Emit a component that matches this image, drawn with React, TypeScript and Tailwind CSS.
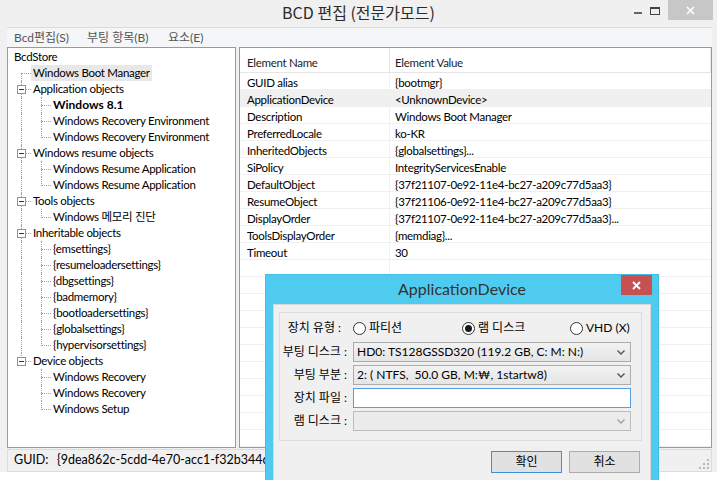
import React from 'react';

type Conn = 'none' | 'pipe' | 'tee' | 'elbow' | 'first';

function Cell({ conn, box }: { conn: Conn; box?: boolean }) {
  return (
    <div className="relative w-[20px] h-[16px] shrink-0">
      {(conn === 'pipe' || conn === 'tee') && (
        <div className="absolute left-[10px] top-0 h-[16px] border-l border-dotted border-[#a0a0a0]" />
      )}
      {conn === 'elbow' && (
        <div className="absolute left-[10px] top-0 h-[9px] border-l border-dotted border-[#a0a0a0]" />
      )}
      {conn === 'first' && (
        <div className="absolute left-[10px] top-[8px] h-[8px] border-l border-dotted border-[#a0a0a0]" />
      )}
      {(conn === 'tee' || conn === 'elbow' || conn === 'first') && (
        <div className="absolute left-[10px] top-[8px] w-[10px] border-t border-dotted border-[#a0a0a0]" />
      )}
      {box && (
        <div className="absolute left-[6px] top-[4px] w-[9px] h-[9px] border border-[#919191] bg-white flex items-center justify-center">
          <div className="w-[5px] h-px bg-[#333]" />
        </div>
      )}
    </div>
  );
}

type Node = { text: string; cells: { conn: Conn; box?: boolean }[]; bold?: boolean; sel?: boolean };

const tree: Node[] = [
  { text: 'BcdStore', cells: [] },
  { text: 'Windows Boot Manager', cells: [{ conn: 'first' }], sel: true },
  { text: 'Application objects', cells: [{ conn: 'tee', box: true }] },
  { text: 'Windows 8.1', cells: [{ conn: 'pipe' }, { conn: 'tee' }], bold: true },
  { text: 'Windows Recovery Environment', cells: [{ conn: 'pipe' }, { conn: 'tee' }] },
  { text: 'Windows Recovery Environment', cells: [{ conn: 'pipe' }, { conn: 'elbow' }] },
  { text: 'Windows resume objects', cells: [{ conn: 'tee', box: true }] },
  { text: 'Windows Resume Application', cells: [{ conn: 'pipe' }, { conn: 'tee' }] },
  { text: 'Windows Resume Application', cells: [{ conn: 'pipe' }, { conn: 'elbow' }] },
  { text: 'Tools objects', cells: [{ conn: 'tee', box: true }] },
  { text: 'Windows 메모리 진단', cells: [{ conn: 'pipe' }, { conn: 'elbow' }] },
  { text: 'Inheritable objects', cells: [{ conn: 'tee', box: true }] },
  { text: '{emsettings}', cells: [{ conn: 'pipe' }, { conn: 'tee' }] },
  { text: '{resumeloadersettings}', cells: [{ conn: 'pipe' }, { conn: 'tee' }] },
  { text: '{dbgsettings}', cells: [{ conn: 'pipe' }, { conn: 'tee' }] },
  { text: '{badmemory}', cells: [{ conn: 'pipe' }, { conn: 'tee' }] },
  { text: '{bootloadersettings}', cells: [{ conn: 'pipe' }, { conn: 'tee' }] },
  { text: '{globalsettings}', cells: [{ conn: 'pipe' }, { conn: 'tee' }] },
  { text: '{hypervisorsettings}', cells: [{ conn: 'pipe' }, { conn: 'elbow' }] },
  { text: 'Device objects', cells: [{ conn: 'elbow', box: true }] },
  { text: 'Windows Recovery', cells: [{ conn: 'none' }, { conn: 'tee' }] },
  { text: 'Windows Recovery', cells: [{ conn: 'none' }, { conn: 'tee' }] },
  { text: 'Windows Setup', cells: [{ conn: 'none' }, { conn: 'elbow' }] },
];

const props: [string, string][] = [
  ['GUID alias', '{bootmgr}'],
  ['ApplicationDevice', '<UnknownDevice>'],
  ['Description', 'Windows Boot Manager'],
  ['PreferredLocale', 'ko-KR'],
  ['InheritedObjects', '{globalsettings}...'],
  ['SiPolicy', 'IntegrityServicesEnable'],
  ['DefaultObject', '{37f21107-0e92-11e4-bc27-a209c77d5aa3}'],
  ['ResumeObject', '{37f21106-0e92-11e4-bc27-a209c77d5aa3}'],
  ['DisplayOrder', '{37f21107-0e92-11e4-bc27-a209c77d5aa3}...'],
  ['ToolsDisplayOrder', '{memdiag}...'],
  ['Timeout', '30'],
];

function Chevron({ light }: { light?: boolean }) {
  return (
    <svg width="8" height="5" viewBox="0 0 8 5" className="shrink-0">
      <path d="M0.5 0.5 L4 4 L7.5 0.5" fill="none" stroke={light ? '#a0a0a0' : '#555'} strokeWidth="1.4" />
    </svg>
  );
}

function Radio({ checked, label }: { checked?: boolean; label: string }) {
  return (
    <div className="flex items-center gap-[3px]">
      <div className="w-[13px] h-[13px] rounded-full border border-[#333] bg-white flex items-center justify-center">
        {checked && <div className="w-[7px] h-[7px] rounded-full bg-[#1a1a1a]" />}
      </div>
      <span className="leading-[16px]">{label}</span>
    </div>
  );
}

export default function App() {
  return (
    <div className="relative w-[717px] h-[480px] overflow-hidden bg-[#f0f0f0] text-[12px] text-black font-['Lato','Noto_Sans_CJK_KR',sans-serif]">
      {/* Title bar */}
      <div className="h-[27px] grid grid-cols-[1fr_auto_1fr]">
        <div />
        <div className="pt-[2px] text-[16px] leading-[20px] text-[#2b2b2b] font-['Noto_Sans_CJK_KR',sans-serif]">
          BCD 편집 (전문가모드)
        </div>
        <div className="flex justify-end items-start pr-[4px]">
          <div className="mt-[12px] mr-[8px] w-[8px] h-[2px] bg-[#666]" />
          <div className="mt-[7px] mr-[8px] w-[10px] h-[8px] border border-t-2 border-[#444]" />
          <div className="w-[45px] h-[20px] bg-[#c7c7c7] flex items-center justify-center">
            <svg width="9" height="9" viewBox="0 0 9 9">
              <path d="M1 1 L8 8 M8 1 L1 8" stroke="#fff" strokeWidth="1.6" />
            </svg>
          </div>
        </div>
      </div>

      {/* Menu bar */}
      <div className="ml-[7px] mr-[5px] h-[20px] bg-[#f5f6f7] border-t border-[#dadbdc] flex items-center pl-[7px] text-[#555]">
        <span className="w-[73px]">Bcd편집(S)</span>
        <span className="w-[81px]">부팅 항목(B)</span>
        <span>요소(E)</span>
      </div>

      {/* Panels */}
      <div className="ml-[7px] mr-[5px] h-[401px] flex gap-[3px]">
        <div className="w-[229px] h-full bg-white border border-[#9a9a9a] pt-[1px] pl-[3px] overflow-hidden text-[11.5px] tracking-[-0.3px]">
          {tree.map((n, i) => (
            <div key={i} className="h-[16px] flex items-center">
              {n.cells.map((c, j) => (
                <Cell key={j} conn={c.conn} box={c.box} />
              ))}
              <span
                className={
                  (n.cells.length === 0 ? 'pl-[3px] ' : 'px-[2px] ') +
                  (n.sel ? 'bg-[#e8e8e8] ' : '') +
                  (n.bold ? 'font-bold text-[12px] tracking-normal ' : '') +
                  'leading-[16px] whitespace-nowrap'
                }
              >
                {n.text}
              </span>
            </div>
          ))}
        </div>

        <div className="flex-1 h-full bg-white border border-[#9a9a9a] overflow-hidden text-[11.5px] tracking-[-0.3px]">
          <div className="flex h-[25px] w-[471px] border-b border-[#e5e5e5]">
            <div className="w-[150px] border-r border-[#e5e5e5] pl-[7px] pt-[6px] text-[#1e1e1e]">Element Name</div>
            <div className="w-[321px] border-r border-[#e5e5e5] pl-[5px] pt-[6px] text-[#1e1e1e]">Element Value</div>
          </div>
          {props.map(([k, v], i) => (
            <div
              key={i}
              className={
                (i === 1 ? 'bg-[#f0f0f0] ' : '') +
                'flex h-[17px] w-[471px] border-b border-[#f0f0f0] leading-[16px]'
              }
            >
              <div className="w-[150px] border-r border-[#f0f0f0] pl-[7px] pt-[2px] whitespace-nowrap">{k}</div>
              <div className="w-[321px] pl-[5px] pt-[2px] whitespace-nowrap">{v}</div>
            </div>
          ))}
          {Array.from({ length: 12 }).map((_, i) => (
            <div key={'e' + i} className="flex h-[17px] w-[471px] border-b border-[#f0f0f0]">
              <div className="w-[150px] border-r border-[#f0f0f0]" />
              <div className="w-[321px]" />
            </div>
          ))}
        </div>
      </div>

      {/* Status bar */}
      <div className="ml-[7px] mr-[5px] mt-[1px] h-[23px] border border-[#dcdcdc] flex items-center pl-[6px] text-[12.5px]">
        <span className="w-[43px]">GUID:</span>
        <span className="whitespace-nowrap">{'{9dea862c-5cdd-4e70-acc1-f32b344d7e21}'}</span>
        <div className="ml-auto mr-[2px] self-end mb-[2px]">
          <svg width="11" height="11" viewBox="0 0 11 11">
            {[
              [9, 1],
              [9, 5],
              [5, 5],
              [9, 9],
              [5, 9],
              [1, 9],
            ].map(([x, y], i) => (
              <rect key={i} x={x} y={y} width="2" height="2" fill="#b8b8b8" />
            ))}
          </svg>
        </div>
      </div>
      <div className="h-[8px] bg-white" />

      {/* Dialog */}
      <div className="absolute left-[265px] top-[274px] w-[394px] h-[220px] bg-[#50cbf0] border border-[#43bde4] flex flex-col">
        <div className="h-[29px] grid grid-cols-[1fr_auto_1fr] shrink-0">
          <div />
          <div className="pt-[4px] text-[16px] leading-[20px] text-[#333]">ApplicationDevice</div>
          <div className="flex justify-end items-start pr-[6px]">
            <div className="w-[31px] h-[20px] bg-[#c75050] flex items-center justify-center">
              <svg width="9" height="9" viewBox="0 0 9 9">
                <path d="M1 1 L8 8 M8 1 L1 8" stroke="#fff" strokeWidth="1.8" />
              </svg>
            </div>
          </div>
        </div>
        <div className="mx-[7px] flex-1 bg-[#f0f0f0] border border-[#d8d8d8] pt-[7px]">
          <div className="ml-[5px] w-[363px] border border-[#dcdcdc] pt-[7px] pb-[9px] flex flex-col">
            <div className="flex items-center h-[16px]">
              <div className="w-[67px] text-right pr-[6px] whitespace-nowrap leading-[16px]">장치 유형 :</div>
              <div className="ml-[6px] flex">
                <div className="w-[109px]">
                  <Radio label="파티션" />
                </div>
                <div className="w-[108px]">
                  <Radio checked label="램 디스크" />
                </div>
                <Radio label="VHD (X)" />
              </div>
            </div>
            <div className="mt-[6px] flex flex-col gap-[3px]">
              <div className="flex items-center h-[20px]">
                <div className="w-[67px] text-right whitespace-nowrap">부팅 디스크 :</div>
                <div className="ml-[6px] w-[278px] h-[20px] border border-[#acacac] bg-linear-to-b from-[#f2f2f2] to-[#e5e5e5] flex items-center pl-[3px] pr-[5px]">
                  <span className="flex-1 whitespace-nowrap">HD0: TS128GSSD320 (119.2 GB, C: M: N:)</span>
                  <Chevron />
                </div>
              </div>
              <div className="flex items-center h-[20px]">
                <div className="w-[67px] text-right whitespace-nowrap">부팅 부분 :</div>
                <div className="ml-[6px] w-[278px] h-[20px] border border-[#acacac] bg-linear-to-b from-[#f2f2f2] to-[#e5e5e5] flex items-center pl-[3px] pr-[5px]">
                  <span className="flex-1 whitespace-pre">2: ( NTFS,  50.0 GB, M:₩, 1startw8)</span>
                  <Chevron />
                </div>
              </div>
              <div className="flex items-center h-[20px]">
                <div className="w-[67px] text-right whitespace-nowrap">장치 파일 :</div>
                <div className="ml-[6px] w-[278px] h-[20px] border border-[#569de5] bg-white" />
              </div>
              <div className="flex items-center h-[20px]">
                <div className="w-[67px] text-right whitespace-nowrap">램 디스크 :</div>
                <div className="ml-[6px] w-[278px] h-[20px] border border-[#bcbcbc] bg-[#ececec] flex items-center justify-end pr-[5px]">
                  <Chevron light />
                </div>
              </div>
            </div>
          </div>
          <div className="mt-[10px] flex justify-end gap-[7px] pr-[10px]">
            <div className="w-[71px] h-[22px] border border-[#3c8fd8] bg-[#e1e1e1] flex items-center justify-center">확인</div>
            <div className="w-[71px] h-[22px] border border-[#adadad] bg-[#e1e1e1] flex items-center justify-center">취소</div>
          </div>
        </div>
      </div>
    </div>
  );
}
